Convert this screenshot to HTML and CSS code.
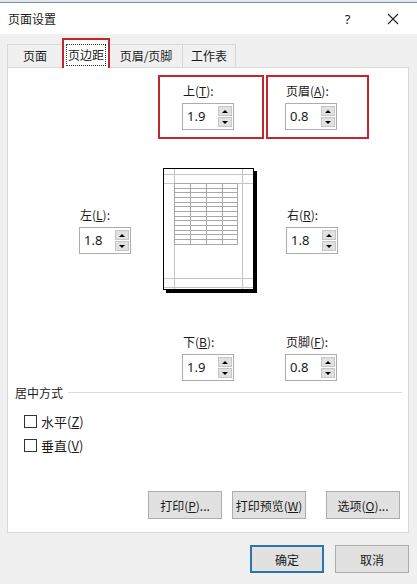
FILE: index.html
```html
<!DOCTYPE html>
<html lang="zh-CN">
<head>
  <meta charset="UTF-8" />
  <meta name="viewport" content="width=device-width, initial-scale=1.0"/>
  <title>页面设置</title>
  <link rel="stylesheet" href="styles.css">
</head>
<body>
  <div class="behind"></div>

  <div class="titlebar">
    <span class="title">页面设置</span>
    <span class="title-btn help">?</span>
    <span class="title-btn close">
      <svg width="12" height="12" viewBox="0 0 12 12"><path d="M1 1 L11 11 M11 1 L1 11" stroke="#222" stroke-width="1.1"/></svg>
    </span>
  </div>

  <div class="dialog">
    <div class="tabs">
      <div class="tab tab-page">页面</div>
      <div class="tab active"><span class="focus">页边距</span></div>
      <div class="tab tab-header">页眉/页脚</div>
      <div class="tab tab-sheet">工作表</div>
    </div>

    <div class="panel">
      <!-- top margin + header -->
      <div class="row-top">
        <div class="mark mark-top">
          <div class="field">
            <label>上(<u>T</u>):</label>
            <div class="spin"><span class="val">1.9</span><span class="arrows"><i class="up"></i><i class="down"></i></span></div>
          </div>
        </div>
        <div class="mark mark-header">
          <div class="field">
            <label>页眉(<u>A</u>):</label>
            <div class="spin"><span class="val">0.8</span><span class="arrows"><i class="up"></i><i class="down"></i></span></div>
          </div>
        </div>
      </div>

      <!-- left / preview / right -->
      <div class="row-mid">
        <div class="field">
          <label>左(<u>L</u>):</label>
          <div class="spin"><span class="val">1.8</span><span class="arrows"><i class="up"></i><i class="down"></i></span></div>
        </div>
        <svg class="preview" width="94" height="125" viewBox="0 0 94 125">
          <rect x="3" y="3" width="91" height="122" fill="#000"/>
          <rect x="0.5" y="0.5" width="90" height="121" fill="#fff" stroke="#000"/>
          <g stroke="#c4c4c4" stroke-width="1">
            <path d="M11.5 1 V121 M79.5 1 V121 M1 6.5 H90 M1 15.5 H90 M1 110.5 H90 M1 119.5 H90"/>
          </g>
          <g stroke="#a8a8a8" stroke-width="1" fill="none">
            <rect x="11.5" y="15.5" width="63" height="61"/>
            <path d="M27.5 15.5 V76.5 M43.5 15.5 V76.5 M59.5 15.5 V76.5"/>
            <path d="M11.5 20.5 H74.5 M11.5 24.5 H74.5 M11.5 29.5 H74.5 M11.5 34.5 H74.5 M11.5 38.5 H74.5 M11.5 43.5 H74.5 M11.5 48.5 H74.5 M11.5 52.5 H74.5 M11.5 57.5 H74.5 M11.5 62.5 H74.5 M11.5 66.5 H74.5 M11.5 71.5 H74.5"/>
          </g>
        </svg>
        <div class="field">
          <label>右(<u>R</u>):</label>
          <div class="spin"><span class="val">1.8</span><span class="arrows"><i class="up"></i><i class="down"></i></span></div>
        </div>
      </div>

      <!-- bottom + footer -->
      <div class="row-bottom">
        <div class="field">
          <label>下(<u>B</u>):</label>
          <div class="spin"><span class="val">1.9</span><span class="arrows"><i class="up"></i><i class="down"></i></span></div>
        </div>
        <div class="field">
          <label>页脚(<u>F</u>):</label>
          <div class="spin"><span class="val">0.8</span><span class="arrows"><i class="up"></i><i class="down"></i></span></div>
        </div>
      </div>

      <div class="group-title">
        <span>居中方式</span>
        <span class="rule"></span>
      </div>
      <div class="checks">
        <div class="check"><span class="box"></span>水平(<u>Z</u>)</div>
        <div class="check"><span class="box"></span>垂直(<u>V</u>)</div>
      </div>

      <div class="panel-buttons">
        <button class="btn">打印(<u>P</u>)...</button>
        <button class="btn">打印预览(<u>W</u>)</button>
        <button class="btn btn-options">选项(<u>O</u>)...</button>
      </div>
    </div>

    <div class="dialog-buttons">
      <button class="btn btn-ok">确定</button>
      <button class="btn">取消</button>
    </div>
  </div>
</body>
</html>
```

FILE: styles.css
```css
:root {
  --face: #f0f0f0;
  --line: #d9d9d9;
  --ctl-border: #adadad;
  --btn: #e1e1e1;
  --mark: #c4262e;
  --text: #1a1a1a;
}

* {
  box-sizing: border-box;
}

body {
  margin: 0;
  width: 417px;
  height: 584px;
  overflow: hidden;
  background: var(--face);
  font-family: "Noto Sans CJK SC", "Noto Sans", sans-serif;
  font-size: 12px;
  color: var(--text);
}

u {
  text-decoration: underline;
  text-underline-offset: 1px;
}

.behind {
  height: 3px;
  background: #e4e8ec;
  border-bottom: 1px solid #7d8f9f;
}

.titlebar {
  height: 31px;
  background: #fff;
  display: flex;
  align-items: center;
  padding-left: 8px;
}

.title {
  flex: 1;
  font-size: 12px;
}

.title-btn {
  width: 45px;
  display: flex;
  justify-content: center;
  align-items: center;
}

.help {
  font-family: "Noto Sans", sans-serif;
  font-size: 13px;
}

.close {
  margin-right: 2px;
}

.dialog {
  padding: 0 8px 0 7px;
}

/* tabs */
.tabs {
  display: flex;
  align-items: flex-end;
  height: 33px;
  padding-left: 1px;
}

.tab {
  height: 23px;
  line-height: 22px;
  border: 1px solid var(--line);
  border-bottom: none;
  margin-left: -1px;
  background: var(--face);
  text-align: center;
}

.tab-page {
  width: 56px;
}

.tab-header {
  width: 74px;
}

.tab-sheet {
  width: 54px;
}

.tab.active {
  position: relative;
  z-index: 1;
  width: 48px;
  height: 30px;
  line-height: 30px;
  margin: 0 0 -1px -1px;
  background: #fff;
  border: 2px solid var(--mark);
  border-bottom: none;
}

.focus {
  border: 1px dotted #333;
  padding: 1px 1px 2px;
}

.panel {
  height: 466px;
  background: #fff;
  border: 1px solid var(--line);
  display: flex;
  flex-direction: column;
}

/* fields */
.field label {
  display: block;
  height: 16px;
  line-height: 16px;
  margin: 0 0 4px 1px;
}

.spin {
  width: 52px;
  height: 27px;
  border: 1px solid var(--ctl-border);
  background: #fff;
  display: flex;
  justify-content: space-between;
}

.val {
  font-family: "Noto Sans", sans-serif;
  font-size: 13px;
  line-height: 25px;
  padding-left: 4px;
}

.arrows {
  width: 15px;
  display: flex;
  flex-direction: column;
  gap: 1px;
  padding: 2px 1px 2px 0;
}

.arrows i {
  flex: 1;
  background: var(--btn);
  border: 1px solid #c6c6c6;
  display: flex;
  justify-content: center;
  align-items: center;
}

.arrows i::after {
  content: "";
  border-left: 3px solid transparent;
  border-right: 3px solid transparent;
}

.arrows .up::after {
  border-bottom: 3px solid #000;
}

.arrows .down::after {
  border-top: 3px solid #000;
}

/* margin rows */
.row-top {
  display: flex;
  margin: 7px 0 0 150px;
  gap: 2px;
}

.mark {
  height: 64px;
  border: 2px solid var(--mark);
  padding-top: 6px;
}

.mark-top {
  width: 106px;
  padding-left: 22px;
}

.mark-header {
  width: 103px;
  padding-left: 17px;
}

.row-mid {
  display: flex;
  align-items: center;
  margin: 29px 0 0 71px;
}

.preview {
  margin: 0 29px 0 32px;
}

.row-bottom {
  display: flex;
  gap: 51px;
  margin: 41px 0 0 174px;
}

.group-title {
  display: flex;
  align-items: center;
  margin: 3px 6px 0 7px;
  height: 16px;
}

.group-title .rule {
  flex: 1;
  height: 1px;
  background: #dcdcdc;
  margin-left: 5px;
}

.checks {
  display: flex;
  flex-direction: column;
  gap: 8px;
  margin: 13px 0 0 16px;
}

.check {
  display: flex;
  align-items: center;
  height: 16px;
  font-size: 13px;
}

.check .box {
  width: 13px;
  height: 13px;
  border: 1px solid #333;
  margin-right: 4px;
}

/* buttons */
.btn {
  width: 74px;
  height: 28px;
  padding: 0;
  background: var(--btn);
  border: 1px solid var(--ctl-border);
  font-family: inherit;
  font-size: 12px;
  color: var(--text);
}

.panel-buttons {
  margin: auto 8px 13px 0;
  display: flex;
  justify-content: flex-end;
  gap: 10px;
}

.btn-options {
  margin-left: 10px;
}

.dialog-buttons {
  display: flex;
  justify-content: flex-end;
  gap: 11px;
  margin-top: 12px;
}

.btn-ok {
  border: 2px solid #2b74ad;
}
```
